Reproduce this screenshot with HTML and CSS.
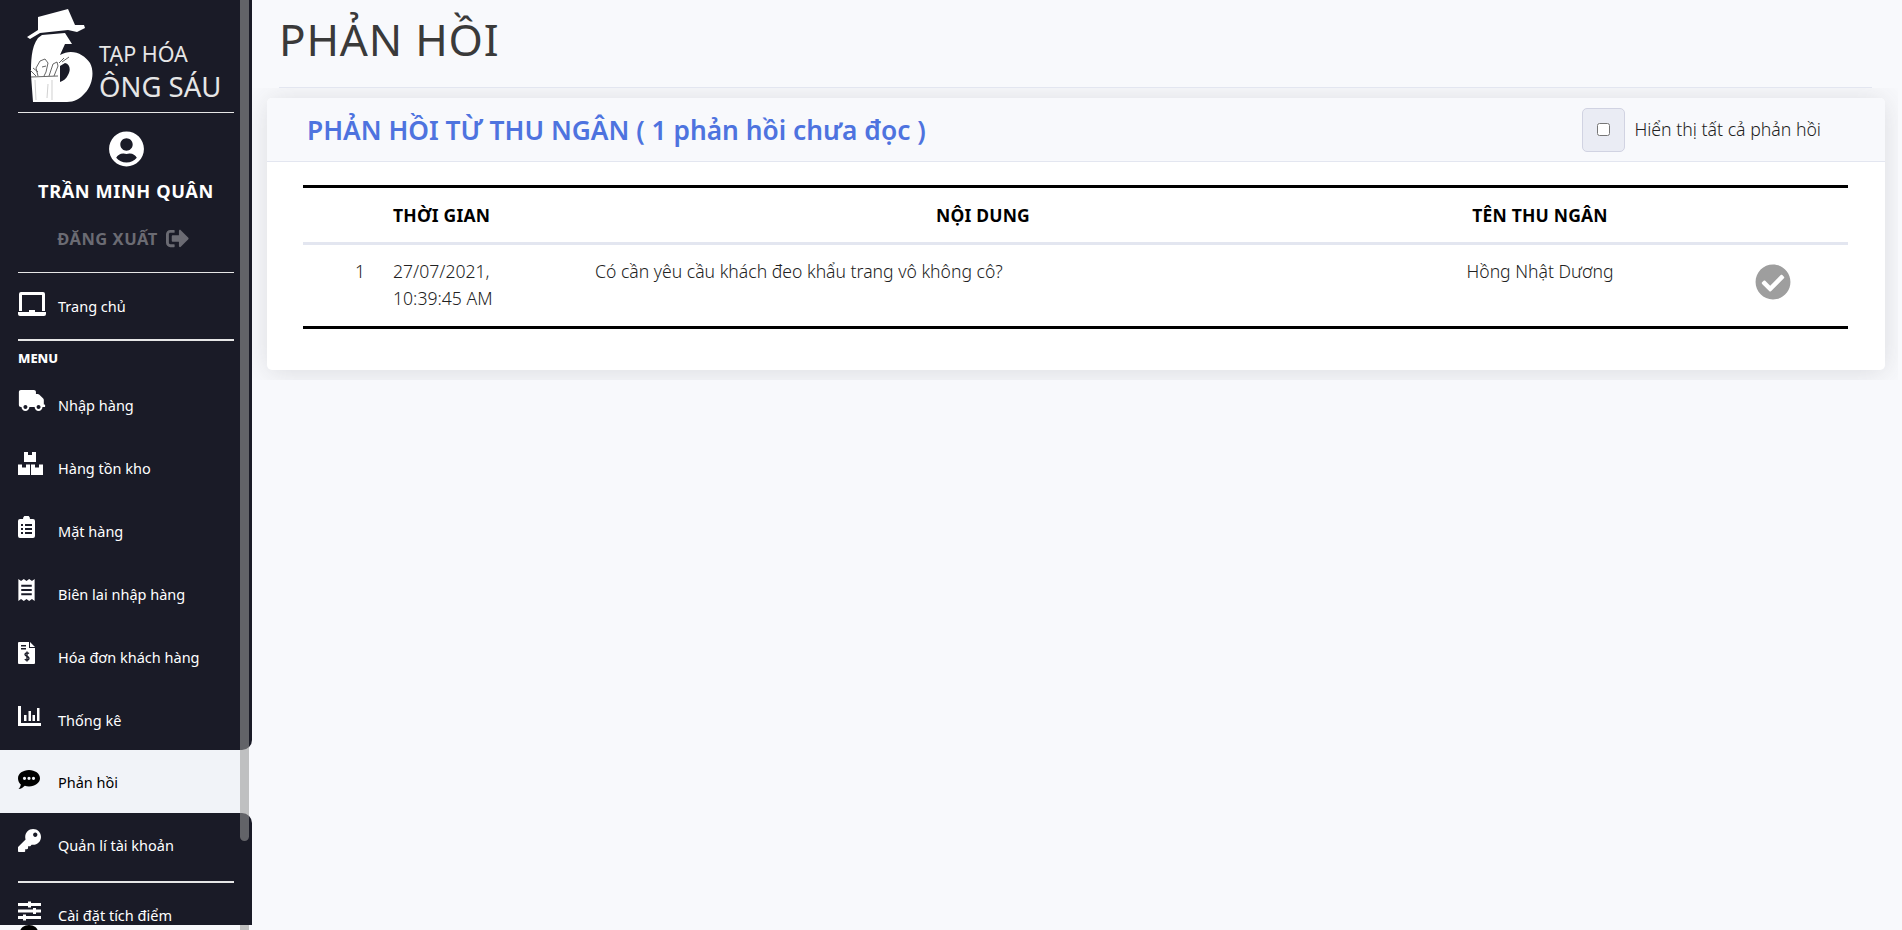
FILE: index.html
```html
<!DOCTYPE html>
<html lang="vi">
<head>
<meta charset="utf-8">
<title>Phản hồi</title>
<link rel="stylesheet" href="styles.css">
</head>
<body>
<div class="app">
  <aside class="side">
    <div class="side-top">
      <div class="brand">
        <svg class="logo" viewBox="27 8 66 96">
          <path fill="#fff" d="M38 17 L68 9 L75 25 L84 25 L85 28 L77 32 L68 30 L40 33 L30 39 L27 37 L38 30Z"/>
          <path fill="#fff" fill-rule="evenodd" d="M38 38 L42 35 L65 33 L72 44 L65 44 L60 55 C72 48 84 54 90 63 C95 72 92 86 85 93 C80 99 74 102 67 102 L33 102 L31 75 C31 62 31 47 38 38Z M60 66 L65 63 C70 64 71 70 68 75 C66 79 63 81 60 82Z"/>
          <path fill="none" stroke="#555" stroke-width=".9" d="M38 76 L36 68 L40 61 L45 59 L48 63 L46 72 L44 76 M49 76 L53 64 L57 62 L58 66 L54 76 M30 70 L36 76 M33 68 L38 72 M59 63 L64 58 M62 62 L69 57 M31 77 L58 76 M42 67 L46 66"/>
          <path fill="none" stroke="#bbb" stroke-width=".7" d="M35 80 L36 100 M48 84 L47 98 M52 80 L52 100"/>
        </svg>
        <div class="brand-text">
          <span class="brand-small">TẠP HÓA</span>
          <span class="brand-big">ÔNG SÁU</span>
        </div>
      </div>
      <hr class="line">
      <div class="user">
        <svg class="avatar" viewBox="0 0 496 512"><path fill="#fff" d="M248 8C111 8 0 119 0 256s111 248 248 248 248-111 248-248S385 8 248 8zm0 96c48.600 0 88 39.400 88 88s-39.400 88-88 88-88-39.400-88-88 39.400-88 88-88zm0 344c-58.700 0-111.300-26.600-146.500-68.200 18.800-35.400 55.600-59.800 98.500-59.800 2.400 0 4.800.4 7.100 1.100 13 4.200 26.600 6.900 40.900 6.900 14.300 0 28-2.700 40.900-6.900 2.300-.7 4.700-1.100 7.100-1.100 42.900 0 79.700 24.400 98.500 59.800C359.300 421.400 306.700 448 248 448z"/></svg>
        <div class="user-name">TRẦN MINH QUÂN</div>
        <div class="logout">
          <span>ĐĂNG XUẤT</span>
          <svg class="logout-ico" viewBox="0 0 512 512"><path fill="#6b6b73" d="M497 273L329 441c-15 15-41 4.500-41-17v-96H152c-13.300 0-24-10.700-24-24v-96c0-13.300 10.700-24 24-24h136V88c0-21.400 25.900-32 41-17l168 168c9.300 9.400 9.300 24.600 0 34zM192 436v-40c0-6.600-5.400-12-12-12H96c-17.700 0-32-14.300-32-32V160c0-17.700 14.300-32 32-32h84c6.600 0 12-5.400 12-12V76c0-6.600-5.400-12-12-12H96c-53 0-96 43-96 96v192c0 53 43 96 96 96h84c6.600 0 12-5.400 12-12z"/></svg>
        </div>
      </div>
      <hr class="line">
      <a class="row row-home">
        <span class="ic"><svg class="i-laptop" viewBox="0 0 28 24"><path fill="#fff" d="M3 0h22a2 2 0 0 1 2 2v17h-3V3H4v16H1V2a2 2 0 0 1 2-2zM0 20h11v-2h6v2h11v2a2 2 0 0 1-2 2H2a2 2 0 0 1-2-2z"/></svg></span>
        <span>Trang chủ</span>
      </a>
      <hr class="line thick">
      <div class="menu-label">MENU</div>
      <a class="row">
        <span class="ic"><svg class="i-truck" viewBox="0 0 640 512"><path fill="#fff" d="M624 352h-16V243.900c0-12.700-5.100-24.900-14.100-33.900L494 110.100c-9-9-21.200-14.100-33.900-14.100H416V48c0-26.500-21.500-48-48-48H48C21.500 0 0 21.500 0 48v320c0 26.500 21.500 48 48 48h16c0 53 43 96 96 96s96-43 96-96h128c0 53 43 96 96 96s96-43 96-96h48c8.800 0 16-7.200 16-16v-32c0-8.800-7.200-16-16-16zM160 464c-26.500 0-48-21.500-48-48s21.500-48 48-48 48 21.500 48 48-21.500 48-48 48zm320 0c-26.500 0-48-21.500-48-48s21.500-48 48-48 48 21.500 48 48-21.500 48-48 48z"/></svg></span>
        <span>Nhập hàng</span>
      </a>
      <a class="row">
        <span class="ic"><svg class="i-boxes" viewBox="0 0 25 23"><path fill="#fff" d="M6 0h4v3h4V0h4v10H6z M0 12.500h4v3h4v-3h4V23H0z M13 12.500h4v3h4v-3h4V23H13z"/></svg></span>
        <span>Hàng tồn kho</span>
      </a>
      <a class="row">
        <span class="ic"><svg class="i-doc" viewBox="0 0 17 22"><path fill="#fff" fill-rule="evenodd" d="M2 3h3a3.500 3.500 0 0 1 7 0h3a2 2 0 0 1 2 2v15a2 2 0 0 1-2 2H2a2 2 0 0 1-2-2V5a2 2 0 0 1 2-2z M3 8v2h2V8z M7 8v2h7V8z M3 12v2h2v-2z M7 12v2h7v-2z M3 16v2h2v-2z M7 16v2h7v-2z"/></svg></span>
        <span>Mặt hàng</span>
      </a>
      <a class="row">
        <span class="ic"><svg class="i-doc" viewBox="0 0 17 23"><path fill="#fff" fill-rule="evenodd" d="M0 0l2.800 2L5.700 0l2.800 2 2.800-2 2.900 2L17 0v23l-2.800-2-2.900 2-2.800-2-2.800 2-2.900-2L0 23z M3 6v2h11V6z M3 10.500v2h11v-2z M3 15v2h11v-2z"/></svg></span>
        <span>Biên lai nhập hàng</span>
      </a>
      <a class="row">
        <span class="ic"><svg class="i-doc" viewBox="0 0 17 22"><path fill="#fff" fill-rule="evenodd" d="M1 0h10v6h6v15a1 1 0 0 1-1 1H1a1 1 0 0 1-1-1V1a1 1 0 0 1 1-1z M12 0l5 5h-5z M3 3v1.500h5V3z M3 6v1.500h5V6z"/><path fill="none" stroke="#1a1b27" stroke-width="1.400" d="M11 11.500C10 10.500 7 10.500 7 12.500s4 1.500 4 3.700-3 2.200-4.200 1.100M9 9.500v10"/></svg></span>
        <span>Hóa đơn khách hàng</span>
      </a>
      <a class="row">
        <span class="ic"><svg class="i-chart" viewBox="0 0 23 20"><path fill="#fff" d="M0 0h3v17h20v3H0z M6 9h2.500v6H6z M10.500 5H13v10h-2.500z M14.500 9H17v6h-2.500z M19 2h2.500v13H19z"/></svg></span>
        <span>Thống kê</span>
      </a>
    </div>
    <a class="row active">
      <span class="ic"><svg class="i-chat" viewBox="0 0 22 19"><path fill="#000" fill-rule="evenodd" d="M11 0c6 0 11 3.600 11 8.200s-5 8.200-11 8.200c-1.500 0-2.900-.2-4.200-.6C5.400 17.200 3 19 .5 19c1-1 2-2.500 2.300-4.600C1 13 0 10.700 0 8.200 0 3.600 5 0 11 0z M6.500 6.700a1.600 1.600 0 1 0 0 3.200 1.600 1.600 0 0 0 0-3.200z M11 6.700a1.600 1.600 0 1 0 0 3.200 1.600 1.600 0 0 0 0-3.200z M15.500 6.700a1.600 1.600 0 1 0 0 3.200 1.600 1.600 0 0 0 0-3.200z"/></svg></span>
      <span>Phản hồi</span>
    </a>
    <div class="side-bottom">
      <a class="row">
        <span class="ic"><svg class="i-key" viewBox="0 0 512 512"><path fill="#fff" d="M512 176.001C512 273.203 433.202 352 336 352c-11.220 0-22.190-1.062-32.827-3.069l-24.012 27.014A23.999 23.999 0 0 1 261.223 384H224v40c0 13.255-10.745 24-24 24h-40v40c0 13.255-10.745 24-24 24H24c-13.255 0-24-10.745-24-24v-78.059c0-6.365 2.529-12.470 7.029-16.971l161.802-161.802C163.108 213.814 160 195.271 160 176 160 78.798 238.797.001 335.999 0 433.488-.001 512 78.511 512 176.001zM336 128c0 26.510 21.490 48 48 48s48-21.490 48-48-21.490-48-48-48-48 21.490-48 48z"/></svg></span>
        <span>Quản lí tài khoản</span>
      </a>
      <hr class="line thick line-low">
      <a class="row row-last">
        <span class="ic"><svg class="i-chart" viewBox="0 0 23 19"><path fill="#fff" d="M0 1.500h10V0h3v1.500h10v3H13V6h-3V4.500H0z M0 8h15V6.500h3V8h5v3h-5v1.500h-3V11H0z M0 14.500h5V13h3v1.500h15v3H8V19H5v-1.500H0z"/></svg></span>
        <span>Cài đặt tích điểm</span>
      </a>
    </div>
    <div class="side-peek"></div>
    <div class="thumb"></div>
    <div class="thumb-end"></div>
  </aside>
  <main class="main">
    <h1 class="title">PHẢN HỒI</h1>
    <hr class="title-line">
    <div class="card-clip">
      <section class="card">
        <header class="card-head">
          <h2 class="card-title">PHẢN HỒI TỪ THU NGÂN ( 1 phản hồi chưa đọc )</h2>
          <label class="show-all">
            <span class="check-box"><input type="checkbox"></span>
            <span>Hiển thị tất cả phản hồi</span>
          </label>
        </header>
        <div class="card-body">
          <table class="table">
            <colgroup>
              <col class="c1"><col class="c2"><col class="c3"><col class="c4"><col class="c5">
            </colgroup>
            <thead>
              <tr>
                <th></th>
                <th class="left">THỜI GIAN</th>
                <th>NỘI DUNG</th>
                <th>TÊN THU NGÂN</th>
                <th></th>
              </tr>
            </thead>
            <tbody>
              <tr>
                <td class="num">1</td>
                <td>27/07/2021,<br>10:39:45 AM</td>
                <td>Có cần yêu cầu khách đeo khẩu trang vô không cô?</td>
                <td class="center">Hồng Nhật Dương</td>
                <td class="center"><svg class="check" viewBox="0 0 512 512"><path fill="#9e9e9e" d="M504 256c0 136.967-111.033 248-248 248S8 392.967 8 256 119.033 8 256 8s248 111.033 248 248zM227.314 387.314l184-184c6.248-6.248 6.248-16.379 0-22.627l-22.627-22.627c-6.248-6.249-16.379-6.249-22.628 0L216 308.118l-70.059-70.059c-6.248-6.248-16.379-6.248-22.628 0l-22.627 22.627c-6.248 6.248-6.248 16.379 0 22.627l104 104c6.249 6.249 16.379 6.249 22.628.001z"/></svg></td>
              </tr>
            </tbody>
          </table>
        </div>
      </section>
    </div>
  </main>
</div>
</body>
</html>
```
FILE: styles.css
```css
* { box-sizing: border-box; }
html, body { margin: 0; height: 100%; overflow: hidden; }
body {
  background: #f8f9fc;
  font-family: "Noto Sans", "Open Sans", sans-serif;
  color: #333;
}
.app { display: flex; height: 930px; }

/* sidebar */
.side {
  position: relative;
  flex: 0 0 252px;
  height: 930px;
  overflow: hidden;
  color: #fff;
  font-size: 14.500px;
}
.side-top {
  background: #1a1b27;
  height: 750px;
  border-bottom-right-radius: 10px;
  overflow: hidden;
}
.brand { display: flex; align-items: flex-start; height: 112px; padding: 8px 0 0 27px; }
.logo { width: 66px; height: 96px; flex: none; }
.brand-text { display: flex; flex-direction: column; margin: 32px 0 0 6px; color: #e6e6e6; line-height: 1; }
.brand-small { font-size: 21.500px; margin-top: 3px; white-space: nowrap; }
.brand-big { font-size: 27.500px; margin-top: 8px; white-space: nowrap; }
.line { margin: 0 18px; border: 0; border-top: 1px solid #e6e6e6; width: 216px; }
.line.thick { border-top-width: 2px; }
.user { height: 159px; display: flex; flex-direction: column; align-items: center; }
.avatar { width: 35px; height: 36px; margin-top: 18px; }
.user-name { font-weight: 700; font-size: 18.200px; margin-top: 11px; line-height: 26px; letter-spacing: .6px; white-space: nowrap; }
.logout { display: flex; align-items: center; gap: 8px; color: #6b6b73; font-weight: 700; font-size: 16.500px; margin-top: 23px; letter-spacing: .5px; padding-right: 6px; }
.logout-ico { width: 23px; height: 23px; }
.row { display: flex; align-items: center; height: 63px; padding-left: 18px; white-space: nowrap; color: #fff; }
.row-home { height: 66px; }
.row-home .ic { margin-bottom: 5px; }
.row-last { height: 42px; padding-top: 22px; }
.ic { display: flex; width: 40px; flex: none; margin-bottom: 8px; }
.i-laptop { width: 28px; height: 24px; }
.i-truck { width: 28px; height: 21px; }
.i-boxes { width: 25px; height: 23px; }
.i-doc { width: 17px; height: 22px; }
.i-chart { width: 23px; height: 20px; }
.i-chat { width: 22px; height: 19px; }
.i-key { width: 23px; height: 23px; }
.menu-label { font-size: 13px; font-weight: 800; line-height: 33px; padding: 1px 18px 0; height: 32px; }
.active { background: #f1f3f8; color: #000; width: 240px; }
.active .ic { margin-bottom: 4px; }
.side-bottom {
  background: #1a1b27;
  height: 112px;
  border-top-right-radius: 10px;
  overflow: hidden;
}
.line-low { margin-top: 5px; }
.side-peek { width: 18px; height: 14px; margin-left: 20px; background: #000; border-radius: 50%; }
.thumb {
  position: absolute;
  left: 240px;
  top: 0;
  width: 9px;
  height: 841px;
  background: rgba(150, 150, 150, .586);
  border-radius: 0 0 5px 5px;
}
.thumb-end { position: absolute; left: 240px; top: 925px; width: 9px; height: 5px; background: #bfbfbf; }

/* main */
.main { flex: 1; min-width: 0; padding-right: 4px; }
.title { margin: 0; padding: 14px 0 0 27px; height: 87px; font-size: 44px; line-height: 50px; font-weight: 400; letter-spacing: .8px; color: #3a3a3a; white-space: nowrap; }
.title-line { margin: 0 26px 0 27px; border: 0; border-top: 1px solid #e3e6f0; }
.card-clip { padding: 10px 13px 10px 15px; overflow: hidden; height: 292px; }
.card {
  height: 272px;
  background: #fff;
  border-radius: 5px;
  box-shadow: 0 2.400px 28px rgba(58, 59, 69, .15);
  overflow: hidden;
}
.card-head {
  display: flex;
  align-items: center;
  justify-content: space-between;
  height: 64px;
  padding: 0 64px 0 40px;
  background: #f8f9fc;
  border-bottom: 1px solid #e3e6f0;
}
.card-title { margin: 0; font-size: 26.300px; font-weight: 600; color: #4e73df; white-space: nowrap; }
.show-all { display: flex; align-items: center; gap: 9px; font-size: 17.700px; font-weight: 300; color: #222; white-space: nowrap; }
.show-all > span:last-child { margin-bottom: 2px; }
.check-box {
  display: flex;
  align-items: center;
  justify-content: center;
  width: 43px;
  height: 44px;
  background: #eaecf4;
  border: 1px solid #d1d3e2;
  border-radius: 5px;
}
.check-box input { margin: 0; width: 13px; height: 13px; }
.card-body { padding: 23px 37px 0 36px; }
.table { width: 100%; border-collapse: collapse; table-layout: fixed; font-size: 17.600px; font-weight: 300; color: #222; border-top: 3px solid #000; border-bottom: 3px solid #000; }
.c1 { width: 78px; }
.c2 { width: 202px; }
.c3 { width: 800px; }
.c4 { width: 314px; }
.c5 { width: 151px; }
.table th { height: 57px; padding: 0 12px; font-size: 17.500px; font-weight: 700; letter-spacing: .2px; color: #000; text-align: center; border-bottom: 3px solid #e3e6f0; }
.table th.left { text-align: left; }
.table td { padding: 13px 12px 14px; line-height: 27px; vertical-align: top; }
.table td.num { text-align: right; padding-right: 16px; }
.table td.center { text-align: center; }
.check { width: 36px; height: 36px; display: block; margin: 6px auto 0; }
```
